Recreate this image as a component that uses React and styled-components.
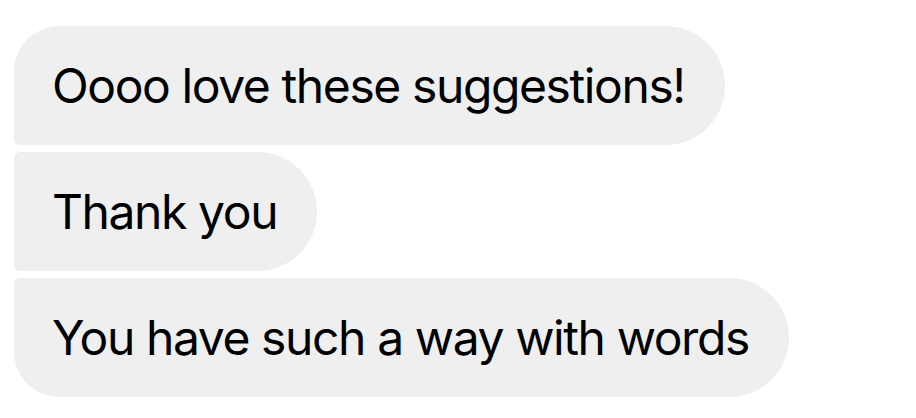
import React from 'react';
import styled, { createGlobalStyle } from 'styled-components';

const GlobalStyle = createGlobalStyle`
    body {
        margin: 0;
        background-color: #ffffff;
        font-family: Inter, "Liberation Sans", sans-serif;
    }
`;

const Thread = styled.div`
    display: flex;
    flex-direction: column;
    align-items: flex-start;
    gap: 7px;

    padding-top: 26px;
    padding-left: 14px;
`;

const Bubble = styled.div`
    height: 119px;

    display: flex;
    align-items: center;

    padding: 0 40px 0 38px;

    border-radius: ${(props) => (props.first ? 46 : 6)}px 60px 60px ${(props) => (props.last ? 46 : 6)}px;
    background-color: #efefef;

    color: #000;
    font-size: 48px;
    font-weight: 400;
    letter-spacing: -1.4px;
    white-space: nowrap;
`;

const messages = [
    'Oooo love these suggestions!',
    'Thank you',
    'You have such a way with words',
];

const App = () => {
    return (
        <>
            <GlobalStyle />
            <Thread>
                {messages.map((text, i) => (
                    <Bubble key={i} first={i === 0} last={i === messages.length - 1}>
                        {text}
                    </Bubble>
                ))}
            </Thread>
        </>
    );
};

export default App;
